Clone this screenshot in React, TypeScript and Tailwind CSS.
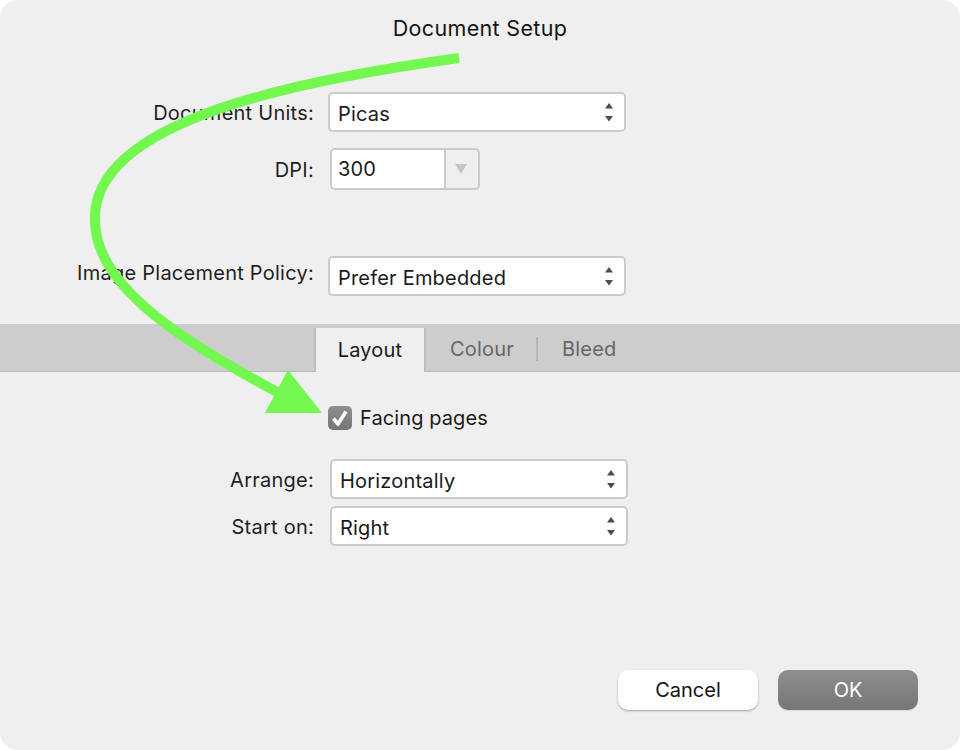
const font = "[font-family:Inter,'Liberation_Sans',sans-serif]";

function Stepper() {
  return (
    <svg width="10" height="20" viewBox="0 0 10 20" className="shrink-0">
      <path d="M5 1 L9 6.5 L1 6.5 Z" fill="#4d4d4d" />
      <path d="M1 14 L9 14 L5 19.5 Z" fill="#4d4d4d" />
    </svg>
  );
}

function Select({ value, className }: { value: string; className: string }) {
  return (
    <div
      className={`flex items-center justify-between rounded-[5px] border-2 border-[#cbcbcb] bg-white pl-2 pr-[10px] text-[20px] tracking-[0.2px] text-[#1a1a1a] ${className}`}
    >
      <span className="pt-[3px]">{value}</span>
      <Stepper />
    </div>
  );
}

function Row({
  label,
  labelClass,
  className,
  children,
}: {
  label: string;
  labelClass: string;
  className: string;
  children: React.ReactNode;
}) {
  return (
    <div className={`flex items-center ${className}`}>
      <div className={`w-[314px] text-right text-[20px] tracking-[0.25px] text-[#1f1f1f] ${labelClass}`}>{label}</div>
      {children}
    </div>
  );
}

export default function App() {
  return (
    <div className={`relative h-[750px] w-[960px] overflow-hidden bg-white ${font}`}>
      <div className="flex h-full flex-col rounded-[18px] bg-[#efefef]">
        <h1 className="pt-[14px] text-center text-[21.5px] leading-[28px] tracking-[0.35px] text-[#141414]">Document Setup</h1>

        <Row label="Document Units:" labelClass="pt-[2px]" className="mt-[50px]">
          <Select value="Picas" className="ml-[14px] h-10 w-[298px]" />
        </Row>

        <Row label="DPI:" labelClass="pt-[2px]" className="mt-4">
          <div className="ml-4 flex h-[42px] w-[150px] overflow-hidden rounded-[5px] border-2 border-[#cbcbcb] text-[20px] tracking-[0.2px] text-[#1a1a1a]">
            <div className="flex w-[112px] items-center bg-white pl-[6px]">300</div>
            <div className="flex flex-1 items-center justify-center border-l-2 border-[#cbcbcb] pr-0.5">
              <svg width="12" height="12" viewBox="0 0 12 12">
                <path d="M0 1 L12 1 L6 11 Z" fill="#c6c6c6" />
              </svg>
            </div>
          </div>
        </Row>

        <Row label="Image Placement Policy:" labelClass="pb-[6px]" className="mt-[66px]">
          <Select value="Prefer Embedded" className="ml-[14px] h-10 w-[298px]" />
        </Row>

        <div className="mt-7 flex h-12 items-end border-b border-[#b9b9b9] bg-[#cdcdcd] pl-[314px] text-[20px] tracking-[0.2px]">
          <div className="-mb-px flex h-[44px] w-[112px] items-center justify-center border-x-2 border-[#bdbdbd] bg-[#efefef] text-[#1a1a1a]">
            Layout
          </div>
          <div className="flex h-[44px] items-center pl-[24px] text-[#666666]">
            <span>Colour</span>
            <span className="ml-[22px] mr-[24px] h-6 w-0.5 bg-[#b5b5b5]" />
            <span>Bleed</span>
          </div>
        </div>

        <div className="mt-[31px] flex items-center pl-[328px]">
          <div className="flex h-6 w-6 items-center justify-center rounded-[5px] bg-gradient-to-b from-[#8e8e8e] to-[#767676]">
            <svg width="20" height="20" viewBox="0 0 20 20" fill="none">
              <path d="M3.5 10.5 L8 16 L16 3.5" stroke="white" strokeWidth="3.6" strokeLinejoin="round" />
            </svg>
          </div>
          <span className="ml-2 text-[20px] tracking-[0.1px] text-[#1a1a1a]">Facing pages</span>
        </div>

        <Row label="Arrange:" labelClass="pt-[2px]" className="mt-[26px]">
          <Select value="Horizontally" className="ml-4 h-10 w-[298px]" />
        </Row>

        <Row label="Start on:" labelClass="pt-[2px]" className="mt-[7px]">
          <Select value="Right" className="ml-4 h-10 w-[298px]" />
        </Row>

        <div className="mt-[124px] flex justify-end gap-5 pr-[42px] text-[20px]">
          <button className="h-10 w-[140px] rounded-[10px] bg-white text-[#141414] shadow-[0_1px_2px_rgba(0,0,0,0.35)]">Cancel</button>
          <button className="h-10 w-[140px] rounded-[10px] bg-gradient-to-b from-[#8f8f8f] to-[#767676] text-white shadow-[0_1px_1px_rgba(0,0,0,0.1)]">OK</button>
        </div>
      </div>

      <svg width="960" height="750" viewBox="0 0 960 750" fill="none" className="pointer-events-none absolute left-0 top-0">
        <path
          d="M459 58 C 300 80, 92 120, 95 220 C 95 290, 190 345, 288 398"
          stroke="#72f84f"
          strokeWidth="10"
        />
        <path d="M288 370 L265 413 L322 413 Z" fill="#72f84f" />
      </svg>
    </div>
  );
}
